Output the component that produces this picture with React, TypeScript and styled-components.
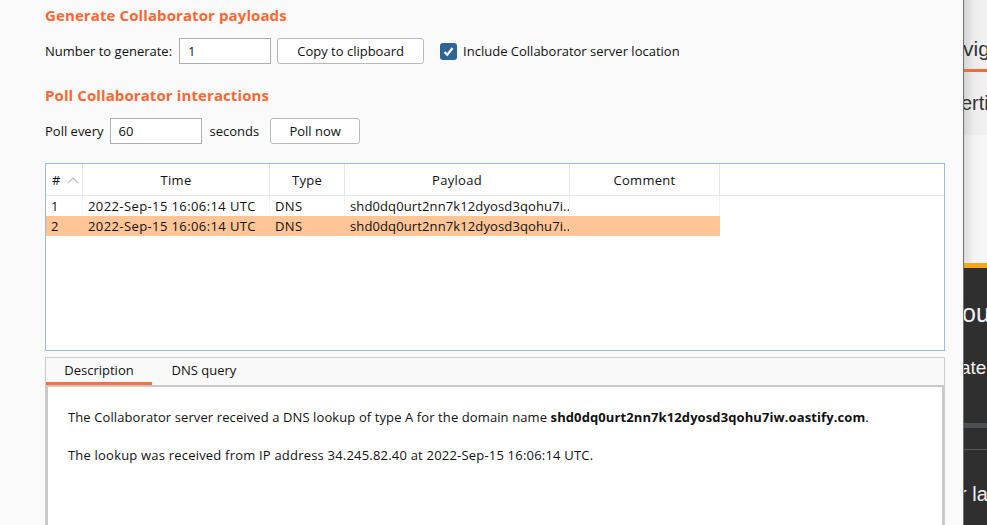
import React from "react";
import styled, { createGlobalStyle } from "styled-components";

const Global = createGlobalStyle`
  html, body { margin: 0; padding: 0; background: #fafafa; }
  body {
    font-family: "Open Sans", "Noto Sans", "DejaVu Sans", sans-serif;
    font-size: 13px;
    color: #111;
    overflow: hidden;
  }
`;

const Page = styled.div`
  display: flex;
  width: 987px;
  height: 525px;
  overflow: hidden;
  background: #fafafa;
`;

const Main = styled.div`
  flex: 0 0 963px;
  box-sizing: border-box;
  padding: 0 18px 0 45px;
  display: flex;
  flex-direction: column;
`;

const SectionTitle = styled.div<{ $mt: number }>`
  margin-top: ${(p) => p.$mt}px;
  height: 22px;
  line-height: 22px;
  font-size: 15px;
  font-weight: 700;
  color: #ff6633;
  letter-spacing: 0.1px;
`;

const Row = styled.div<{ $mt: number }>`
  margin-top: ${(p) => p.$mt}px;
  height: 26px;
  display: flex;
  align-items: center;
`;

const Label = styled.span<{ $ml?: number }>`
  margin-left: ${(p) => p.$ml ?? 0}px;
  white-space: nowrap;
`;

const TextInput = styled.div<{ $w: number; $ml: number }>`
  box-sizing: border-box;
  width: ${(p) => p.$w}px;
  height: 26px;
  margin-left: ${(p) => p.$ml}px;
  border: 1px solid #acacac;
  background: #fff;
  padding-left: 8px;
  line-height: 24px;
`;

const Button = styled.div<{ $w: number; $ml: number }>`
  box-sizing: border-box;
  width: ${(p) => p.$w}px;
  height: 26px;
  margin-left: ${(p) => p.$ml}px;
  border: 1px solid #b9b9b9;
  border-radius: 3px;
  background: #fff;
  text-align: center;
  line-height: 24px;
`;

const Check = styled.div<{ $ml: number }>`
  width: 17px;
  height: 17px;
  margin-left: ${(p) => p.$ml}px;
  border-radius: 3px;
  background: #2d6399;
  display: flex;
  align-items: center;
  justify-content: center;
`;

const Table = styled.div`
  margin-top: 19px;
  height: 188px;
  flex-shrink: 0;
  box-sizing: border-box;
  border: 1px solid #9bbbe0;
  background: #fff;
  display: flex;
  flex-direction: column;
`;

const GridRow = styled.div<{ $head?: boolean }>`
  display: grid;
  grid-template-columns: 37px 187px 75px 225px 150px 1fr;
  height: ${(p) => (p.$head ? 31 : 20)}px;
  border-bottom: ${(p) => (p.$head ? "1px solid #e6e6e6" : "none")};
`;

const HeadCell = styled.div<{ $left?: boolean }>`
  border-right: 1px solid #e6e6e6;
  display: flex;
  align-items: center;
  justify-content: ${(p) => (p.$left ? "flex-start" : "center")};
  padding-left: ${(p) => (p.$left ? 6 : 0)}px;
  white-space: nowrap;
  overflow: hidden;
  letter-spacing: 0.3px;
`;

const HeadEnd = styled.div``;

const Cell = styled.div<{ $sel?: boolean; $ls?: number }>`
  background: ${(p) => (p.$sel ? "#ffc597" : "#fff")};
  border-right: 1px solid ${(p) => (p.$sel ? "#ffc597" : "#f3f3f3")};
  padding-left: 5px;
  line-height: 20px;
  white-space: nowrap;
  overflow: hidden;
  min-width: 0;
  letter-spacing: ${(p) => p.$ls ?? 0.4}px;
`;

const EmptyCell = styled.div``;

const Lower = styled.div`
  margin-top: 6px;
  flex: 1;
  box-sizing: border-box;
  border: 1px solid #cdcdcd;
  border-bottom: none;
  display: flex;
  flex-direction: column;
`;

const TabBar = styled.div`
  height: 27px;
  display: flex;
  background: #f9f9f9;
`;

const Tab = styled.div<{ $active?: boolean; $w: number }>`
  width: ${(p) => p.$w}px;
  box-sizing: border-box;
  text-align: center;
  line-height: 25px;
  border-bottom: 3px solid ${(p) => (p.$active ? "#ff6c3e" : "transparent")};
`;

const Content = styled.div`
  flex: 1;
  background: #fff;
  border-top: 2px solid #c9c9c9;
  border-left: 2px solid #c9c9c9;
  border-right: 2px solid #c9c9c9;
  padding: 21px 20px 0;
  letter-spacing: 0.12px;
`;

const Para = styled.p<{ $ls?: number }>`
  margin: 0 0 20px;
  line-height: 18px;
  white-space: nowrap;
  letter-spacing: ${(p) => p.$ls ?? 0.12}px;
`;

const Strong = styled.b`
  letter-spacing: 0.1px;
`;

const Side = styled.div`
  flex: 0 0 24px;
  display: flex;
  flex-direction: column;
  border-left: 1px solid #707070;
  overflow: hidden;
  font-family: "Liberation Sans", Arial, sans-serif;
  white-space: nowrap;
`;

const SideTop = styled.div`
  height: 263px;
  flex-shrink: 0;
  background: linear-gradient(to right, #d4d4d4 0px, #ececec 10px, #f2f2f2 100%);
  display: flex;
  flex-direction: column;
`;

const SideNav = styled.div`
  height: 72px;
  flex-shrink: 0;
  display: flex;
  align-items: flex-end;
  padding-bottom: 8px;
  box-sizing: border-box;
  font-size: 21px;
  color: #333;
  border-bottom: 3px solid #f06a3c;
  text-indent: -1px;
`;

const SideItem = styled.div`
  height: 63px;
  flex-shrink: 0;
  display: flex;
  align-items: center;
  font-size: 20px;
  color: #333;
  text-indent: -3px;
`;

const SideRest = styled.div`
  flex: 1;
  background: linear-gradient(to right, #dcdcdc 0px, #f3f3f3 10px, #f7f7f7 100%);
`;

const SideDark = styled.div`
  flex: 1;
  background: #2f2f2f;
  border-top: 5px solid #f6a81d;
  color: #f0f0f0;
  display: flex;
  flex-direction: column;
`;

const DarkText = styled.div<{ $h: number; $size: number; $indent: number }>`
  height: ${(p) => p.$h}px;
  flex-shrink: 0;
  display: flex;
  align-items: center;
  font-size: ${(p) => p.$size}px;
  text-indent: ${(p) => p.$indent}px;
`;

const DarkBand = styled.div`
  height: 5px;
  flex-shrink: 0;
  background: #4b4e53;
`;

const DarkLine = styled.div`
  margin-top: 21px;
  height: 1px;
  flex-shrink: 0;
  background: #5a5a5a;
`;

const SortArrow = () => (
  <svg width="12" height="8" viewBox="0 0 12 8" style={{ marginLeft: 6 }}>
    <path d="M1 7 L6 2 L11 7" fill="none" stroke="#bdbdbd" strokeWidth="1.2" />
  </svg>
);

const domain = "shd0dq0urt2nn7k12dyosd3qohu7iw.oastify.com";
const shortDomain = "shd0dq0urt2nn7k12dyosd3qohu7i..";

const rows = [
  { n: "1", time: "2022-Sep-15 16:06:14 UTC", type: "DNS", sel: false },
  { n: "2", time: "2022-Sep-15 16:06:14 UTC", type: "DNS", sel: true },
];

export default function App() {
  return (
    <>
      <Global />
      <Page>
        <Main>
          <SectionTitle $mt={4}>Generate Collaborator payloads</SectionTitle>
          <Row $mt={12}>
            <Label>Number to generate:</Label>
            <TextInput $w={92} $ml={7}>1</TextInput>
            <Button $w={147} $ml={6}>Copy to clipboard</Button>
            <Check $ml={16}>
              <svg width="13" height="13" viewBox="0 0 13 13">
                <path d="M2.5 7 L5.3 9.8 L10.5 3" fill="none" stroke="#fff" strokeWidth="2.2" />
              </svg>
            </Check>
            <Label $ml={6}>Include Collaborator server location</Label>
          </Row>
          <SectionTitle $mt={20}>Poll Collaborator interactions</SectionTitle>
          <Row $mt={12}>
            <Label>Poll every</Label>
            <TextInput $w={92} $ml={6}>60</TextInput>
            <Label $ml={8}>seconds</Label>
            <Button $w={90} $ml={11}>Poll now</Button>
          </Row>
          <Table>
            <GridRow $head>
              <HeadCell $left>
                #<SortArrow />
              </HeadCell>
              <HeadCell>Time</HeadCell>
              <HeadCell>Type</HeadCell>
              <HeadCell>Payload</HeadCell>
              <HeadCell>Comment</HeadCell>
              <HeadEnd />
            </GridRow>
            {rows.map((r) => (
              <GridRow key={r.n}>
                <Cell $sel={r.sel}>{r.n}</Cell>
                <Cell $sel={r.sel}>{r.time}</Cell>
                <Cell $sel={r.sel}>{r.type}</Cell>
                <Cell $sel={r.sel} $ls={0.12}>{shortDomain}</Cell>
                <Cell $sel={r.sel}></Cell>
                <EmptyCell />
              </GridRow>
            ))}
          </Table>
          <Lower>
            <TabBar>
              <Tab $active $w={106}>Description</Tab>
              <Tab $w={104}>DNS query</Tab>
            </TabBar>
            <Content>
              <Para $ls={0.1}>
                The Collaborator server received a DNS lookup of type A for the domain name{" "}
                <Strong>{domain}</Strong>.
              </Para>
              <Para $ls={0.2}>
                The lookup was received from IP address 34.245.82.40 at 2022-Sep-15 16:06:14 UTC.
              </Para>
            </Content>
          </Lower>
        </Main>
        <Side>
          <SideTop>
            <SideNav>vig</SideNav>
            <SideItem>ertif</SideItem>
            <SideRest />
          </SideTop>
          <SideDark>
            <DarkText $h={90} $size={25} $indent={-2}>our</DarkText>
            <DarkText $h={20} $size={19} $indent={-4}>ater</DarkText>
            <DarkText $h={45} $size={19} $indent={0}></DarkText>
            <DarkBand />
            <DarkLine />
            <DarkText $h={88} $size={20} $indent={-4}>r lal</DarkText>
          </SideDark>
        </Side>
      </Page>
    </>
  );
}
